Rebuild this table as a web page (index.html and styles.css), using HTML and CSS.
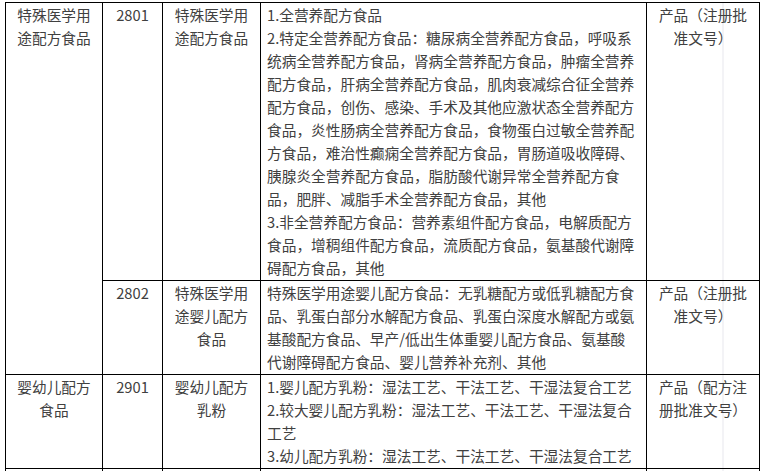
FILE: index.html
```html
<!DOCTYPE html>
<html lang="zh-CN">
<head>
<meta charset="utf-8">
<link rel="stylesheet" href="styles.css">
</head>
<body>
<table class="grid">
  <colgroup>
    <col class="c1"><col class="c2"><col class="c3"><col class="c4"><col class="c5">
  </colgroup>
  <tbody>
    <tr class="r1">
      <td class="ctr" rowspan="2">特殊医学用<br>途配方食品</td>
      <td class="ctr">2801</td>
      <td class="ctr">特殊医学用<br>途配方食品</td>
      <td class="txt">1.全营养配方食品<br>2.特定全营养配方食品：糖尿病全营养配方食品，呼吸系<br>统病全营养配方食品，肾病全营养配方食品，肿瘤全营养<br>配方食品，肝病全营养配方食品，肌肉衰减综合征全营养<br>配方食品，创伤、感染、手术及其他应激状态全营养配方<br>食品，炎性肠病全营养配方食品，食物蛋白过敏全营养配<br>方食品，难治性癫痫全营养配方食品，胃肠道吸收障碍、<br>胰腺炎全营养配方食品，脂肪酸代谢异常全营养配方食<br>品，肥胖、减脂手术全营养配方食品，其他<br>3.非全营养配方食品：营养素组件配方食品，电解质配方<br>食品，增稠组件配方食品，流质配方食品，氨基酸代谢障<br>碍配方食品，其他</td>
      <td class="ctr prod">产品（注册批<br>准文号）</td>
    </tr>
    <tr class="r2">
      <td class="ctr">2802</td>
      <td class="ctr">特殊医学用<br>途婴儿配方<br>食品</td>
      <td class="txt">特殊医学用途婴儿配方食品：无乳糖配方或低乳糖配方食<br>品、乳蛋白部分水解配方食品、乳蛋白深度水解配方或氨<br>基酸配方食品、早产/低出生体重婴儿配方食品、氨基酸<br>代谢障碍配方食品、婴儿营养补充剂、其他</td>
      <td class="ctr prod">产品（注册批<br>准文号）</td>
    </tr>
    <tr class="r3">
      <td class="ctr">婴幼儿配方<br>食品</td>
      <td class="ctr">2901</td>
      <td class="ctr">婴幼儿配方<br>乳粉</td>
      <td class="txt">1.婴儿配方乳粉：湿法工艺、干法工艺、干湿法复合工艺<br>2.较大婴儿配方乳粉：湿法工艺、干法工艺、干湿法复合<br>工艺<br>3.幼儿配方乳粉：湿法工艺、干法工艺、干湿法复合工艺</td>
      <td class="ctr prod">产品（配方注<br>册批准文号）</td>
    </tr>
    <tr class="r4">
      <td class="ctr"></td>
      <td class="ctr"></td>
      <td class="ctr"></td>
      <td class="txt"></td>
      <td class="ctr prod"></td>
    </tr>
  </tbody>
</table>
</body>
</html>
```
FILE: styles.css
```css
html, body {
  margin: 0;
  background: #ffffff;
  overflow: hidden;
  height: 471px;
}
body {
  padding: 2px 0 0 5px;
  font-family: "Noto Sans CJK SC", "Noto Sans", sans-serif;
  font-size: 14.7px;
  line-height: 23px;
  color: #404040;
}
.grid {
  border-collapse: collapse;
  table-layout: fixed;
  width: 754px;
}
.c1 { width: 97px; }
.c2 { width: 60px; }
.c3 { width: 98px; }
.c4 { width: 386px; }
.c5 { width: 113px; }
.grid td {
  border: 1px solid #000;
  vertical-align: top;
  padding: 0 0 1px 0;
  white-space: nowrap;
}
.ctr { text-align: center; }
.grid td.txt { text-align: left; padding-left: 6px; }
.prod {
  background: linear-gradient(to right, transparent 75px, #e6e6ec 75px, #e6e6ec 76px, transparent 76px);
}
.r4 td { height: 40px; }
```
